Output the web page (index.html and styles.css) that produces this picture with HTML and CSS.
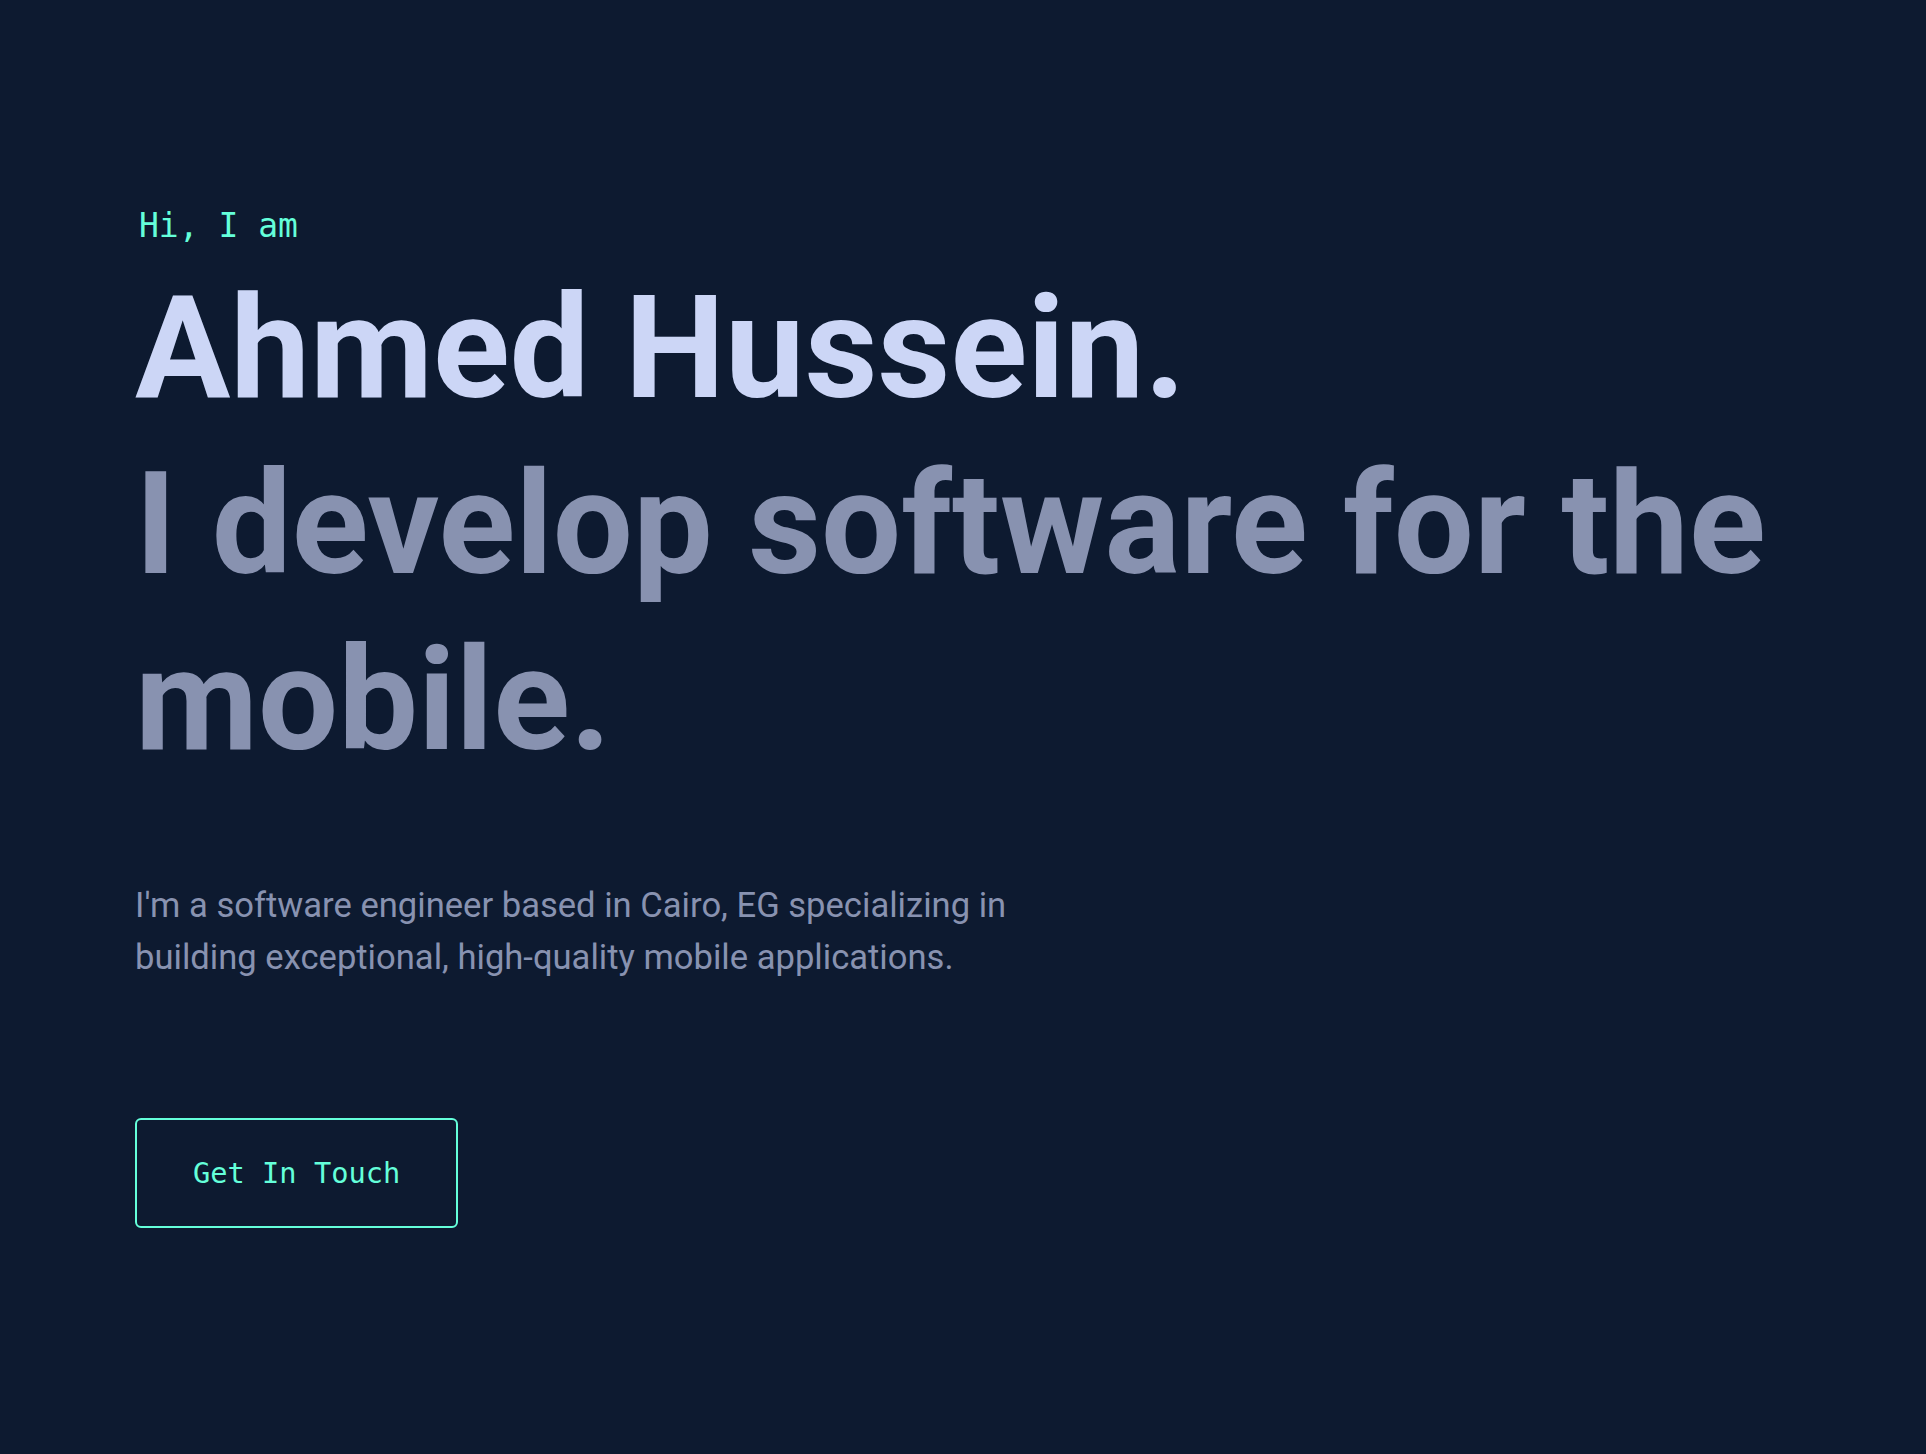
FILE: index.html
```html
<!DOCTYPE html>
<html lang="en">
<head>
<meta charset="utf-8">
<title>Ahmed Hussein</title>
<link rel="stylesheet" href="styles.css">
</head>
<body>
<main class="page">
  <section class="hero">
    <h1 class="hero-greeting">Hi, I am</h1>
    <h2 class="hero-name">Ahmed Hussein.</h2>
    <h3 class="hero-tagline">I develop software for the mobile.</h3>
    <p class="hero-text">I'm a software engineer based in Cairo, EG specializing in building exceptional, high-quality mobile applications.</p>
    <a class="hero-button" href="#contact">Get In Touch</a>
  </section>
</main>
</body>
</html>
```
FILE: styles.css
```css
html, body {
  margin: 0;
  padding: 0;
  background: #0d1a30;
}
body {
  min-height: 1454px;
  font-family: Roboto, "Liberation Sans", sans-serif;
}
.page {
  padding: 208px 0 0 135px;
}
.hero {
  display: flex;
  flex-direction: column;
  align-items: flex-start;
}
.hero-greeting {
  margin: 0 0 17px 4px;
  font-family: "DejaVu Sans Mono", "Liberation Mono", monospace;
  font-weight: 400;
  font-size: 33px;
  line-height: 36px;
  color: #64ffda;
}
.hero-name,
.hero-tagline {
  margin: 0;
  font-family: Roboto, "Liberation Sans", sans-serif;
  font-weight: 700;
  font-size: 142px;
  line-height: 176px;
}
.hero-name {
  color: #ccd6f6;
}
.hero-tagline {
  color: #8892b0;
  max-width: 1680px;
}
.hero-text {
  margin: 90px 0 0;
  max-width: 940px;
  font-size: 34.6px;
  line-height: 52px;
  color: #8892b0;
}
.hero-button {
  margin-top: 135px;
  display: inline-flex;
  align-items: center;
  box-sizing: border-box;
  height: 110px;
  padding: 0 56px;
  border: 2px solid #64ffda;
  border-radius: 6px;
  font-family: "DejaVu Sans Mono", "Liberation Mono", monospace;
  font-size: 28.7px;
  line-height: 28px;
  color: #64ffda;
  text-decoration: none;
}
```
